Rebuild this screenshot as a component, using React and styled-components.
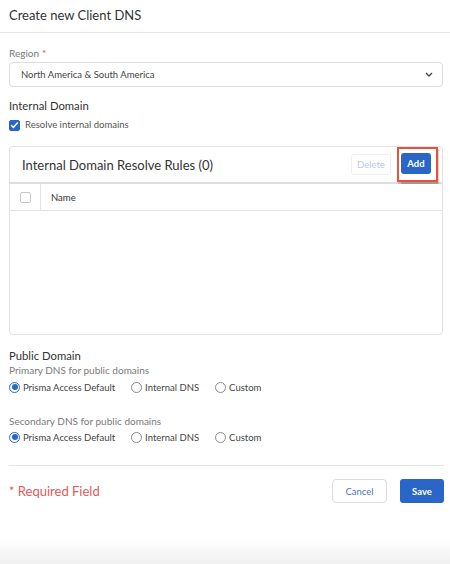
import styled, { createGlobalStyle } from 'styled-components';

const GlobalStyle = createGlobalStyle`
  html, body {
    margin: 0;
    padding: 0;
    background: #fff;
    font-family: Lato, "Open Sans", Arial, sans-serif;
  }
  * { box-sizing: border-box; }
`

const Page = styled.div`
  width: 450px;
  height: 564px;
  display: flex;
  flex-direction: column;
  background: linear-gradient(to bottom, #fff 0, #fff 538px, #f0f0f0 564px);
  overflow: hidden;
`

const Header = styled.div`
  height: 33px;
  display: flex;
  align-items: center;
  padding: 0 9px 2px;
  border-bottom: 1px solid #e6e6e6;
  font-size: 13px;
  color: #333;
`

const Body = styled.div`
  display: flex;
  flex-direction: column;
  padding: 0 6px 0 9px;
`

const FieldLabel = styled.div`
  font-size: 10px;
  color: #7a7a7a;
  margin-top: ${p => p.$top || 0}px;
  line-height: 12px;
`

const Star = styled.span`
  color: #e0474c;
  margin-left: 3px;
`

const Select = styled.div`
  margin-top: 3px;
  margin-right: 1px;
  height: 25px;
  border: 1px solid #dcdcdc;
  border-radius: 4px;
  display: flex;
  align-items: center;
  justify-content: space-between;
  padding: 0 9px 0 11px;
  font-size: 9.5px;
  color: #444;
`

const SectionTitle = styled.div`
  font-size: 11.3px;
  color: #333;
  margin-top: ${p => p.$top || 0}px;
  line-height: 14px;
`

const CheckRow = styled.label`
  display: flex;
  align-items: center;
  gap: 5px;
  margin-top: 6px;
  font-size: 9.5px;
  line-height: 12px;
  color: #555;
`

const Box = styled.span`
  width: 11px;
  height: 11px;
  border-radius: 2px;
  display: inline-flex;
  align-items: center;
  justify-content: center;
  background: ${p => (p.$checked ? '#2767c9' : '#fff')};
  border: 1px solid ${p => (p.$checked ? '#2767c9' : '#c8c8c8')};
`

const Card = styled.div`
  margin-top: 15px;
  margin-right: 1px;
  height: 189px;
  border: 1px solid #e2e2e2;
  border-radius: 4px;
  display: flex;
  flex-direction: column;
`

const CardHead = styled.div`
  height: 37px;
  display: flex;
  align-items: center;
  padding: 0 4px 0 12px;
  border-bottom: 2px solid #dedede;
`

const CardTitle = styled.div`
  flex: 1;
  font-size: 13px;
  color: #333;
`

const GhostButton = styled.button`
  height: 21px;
  width: 40px;
  padding: 0;
  border: 1px solid #efefef;
  border-radius: 3px;
  background: #fff;
  color: #b7c8ec;
  font-family: inherit;
  font-size: 9.5px;
`

const Highlight = styled.div`
  margin-left: 6px;
  padding: 4px 5px 6px 2px;
  border: 2px solid #e5533d;
  box-shadow: 1px 1.5px 1px rgba(0, 0, 0, 0.3);
  display: flex;
`

const PrimaryButton = styled.button`
  height: ${p => p.$h || 21}px;
  width: ${p => p.$w || 30}px;
  padding: 0;
  border: none;
  border-radius: 3px;
  background: #2a66c8;
  color: #fff;
  font-family: inherit;
  font-weight: 700;
  font-size: 9.5px;
`

const ColHead = styled.div`
  height: 27px;
  display: flex;
  border-bottom: 1px solid #e2e2e2;
`

const CheckCell = styled.div`
  width: 31px;
  display: flex;
  align-items: center;
  justify-content: center;
  border-right: 1px solid #e2e2e2;
`

const NameCell = styled.div`
  display: flex;
  align-items: center;
  padding-left: 10px;
  font-size: 9.5px;
  color: #333;
`

const RadioRow = styled.div`
  display: flex;
  align-items: center;
  margin-top: ${p => p.$top || 5}px;
  gap: 16px;
  height: 12px;
`

const RadioItem = styled.label`
  display: flex;
  align-items: center;
  gap: 3px;
  font-size: 9.5px;
  color: #444;
`

const Radio = styled.span`
  width: 11px;
  height: 11px;
  border-radius: 50%;
  border: 1px solid ${p => (p.$on ? '#2767c9' : '#8a8a8a')};
  display: inline-flex;
  align-items: center;
  justify-content: center;
  &::after {
    content: '';
    width: 6px;
    height: 6px;
    border-radius: 50%;
    background: ${p => (p.$on ? '#2767c9' : 'transparent')};
  }
`

const Divider = styled.div`
  margin-top: 22px;
  height: 1px;
  background: #e6e6e6;
`

const Footer = styled.div`
  display: flex;
  align-items: center;
  margin-top: 13px;
  gap: 13px;
`

const Required = styled.div`
  flex: 1;
  font-size: 13px;
  color: #e05a5a;
`

const OutlineButton = styled.button`
  height: 24px;
  width: 55px;
  border: 1px solid #dddddd;
  border-radius: 4px;
  background: #fff;
  color: #4a78c8;
  font-family: inherit;
  font-size: 9.5px;
`

const Chevron = () => (
  <svg width="8" height="5" viewBox="0 0 8 5" fill="none">
    <path d="M1 1l3 3 3-3" stroke="#444" strokeWidth="1.3" />
  </svg>
)

const Tick = () => (
  <svg width="9" height="8" viewBox="0 0 9 8" fill="none">
    <path d="M1.2 4.2l2.2 2.2L7.8 1.4" stroke="#fff" strokeWidth="1.5" />
  </svg>
)

const options = ['Prisma Access Default', 'Internal DNS', 'Custom']

function RadioGroup({ top }) {
  return (
    <RadioRow $top={top}>
      {options.map((o, i) => (
        <RadioItem key={o}>
          <Radio $on={i === 0} />
          {o}
        </RadioItem>
      ))}
    </RadioRow>
  )
}

export default function App() {
  return (
    <Page>
      <GlobalStyle />
      <Header>Create new Client DNS</Header>
      <Body>
        <FieldLabel $top={14}>
          Region<Star>*</Star>
        </FieldLabel>
        <Select>
          North America &amp; South America
          <Chevron />
        </Select>

        <SectionTitle $top={12}>Internal Domain</SectionTitle>
        <CheckRow>
          <Box $checked><Tick /></Box>
          Resolve internal domains
        </CheckRow>

        <Card>
          <CardHead>
            <CardTitle>Internal Domain Resolve Rules (0)</CardTitle>
            <GhostButton>Delete</GhostButton>
            <Highlight>
              <PrimaryButton>Add</PrimaryButton>
            </Highlight>
          </CardHead>
          <ColHead>
            <CheckCell>
              <Box />
            </CheckCell>
            <NameCell>Name</NameCell>
          </ColHead>
        </Card>

        <SectionTitle $top={14}>Public Domain</SectionTitle>
        <FieldLabel $top={1}>Primary DNS for public domains</FieldLabel>
        <RadioGroup top={5} />

        <FieldLabel $top={22}>Secondary DNS for public domains</FieldLabel>
        <RadioGroup top={4} />

        <Divider />
        <Footer>
          <Required>* Required Field</Required>
          <OutlineButton>Cancel</OutlineButton>
          <PrimaryButton $h={24} $w={44}>Save</PrimaryButton>
        </Footer>
      </Body>
    </Page>
  )
}
